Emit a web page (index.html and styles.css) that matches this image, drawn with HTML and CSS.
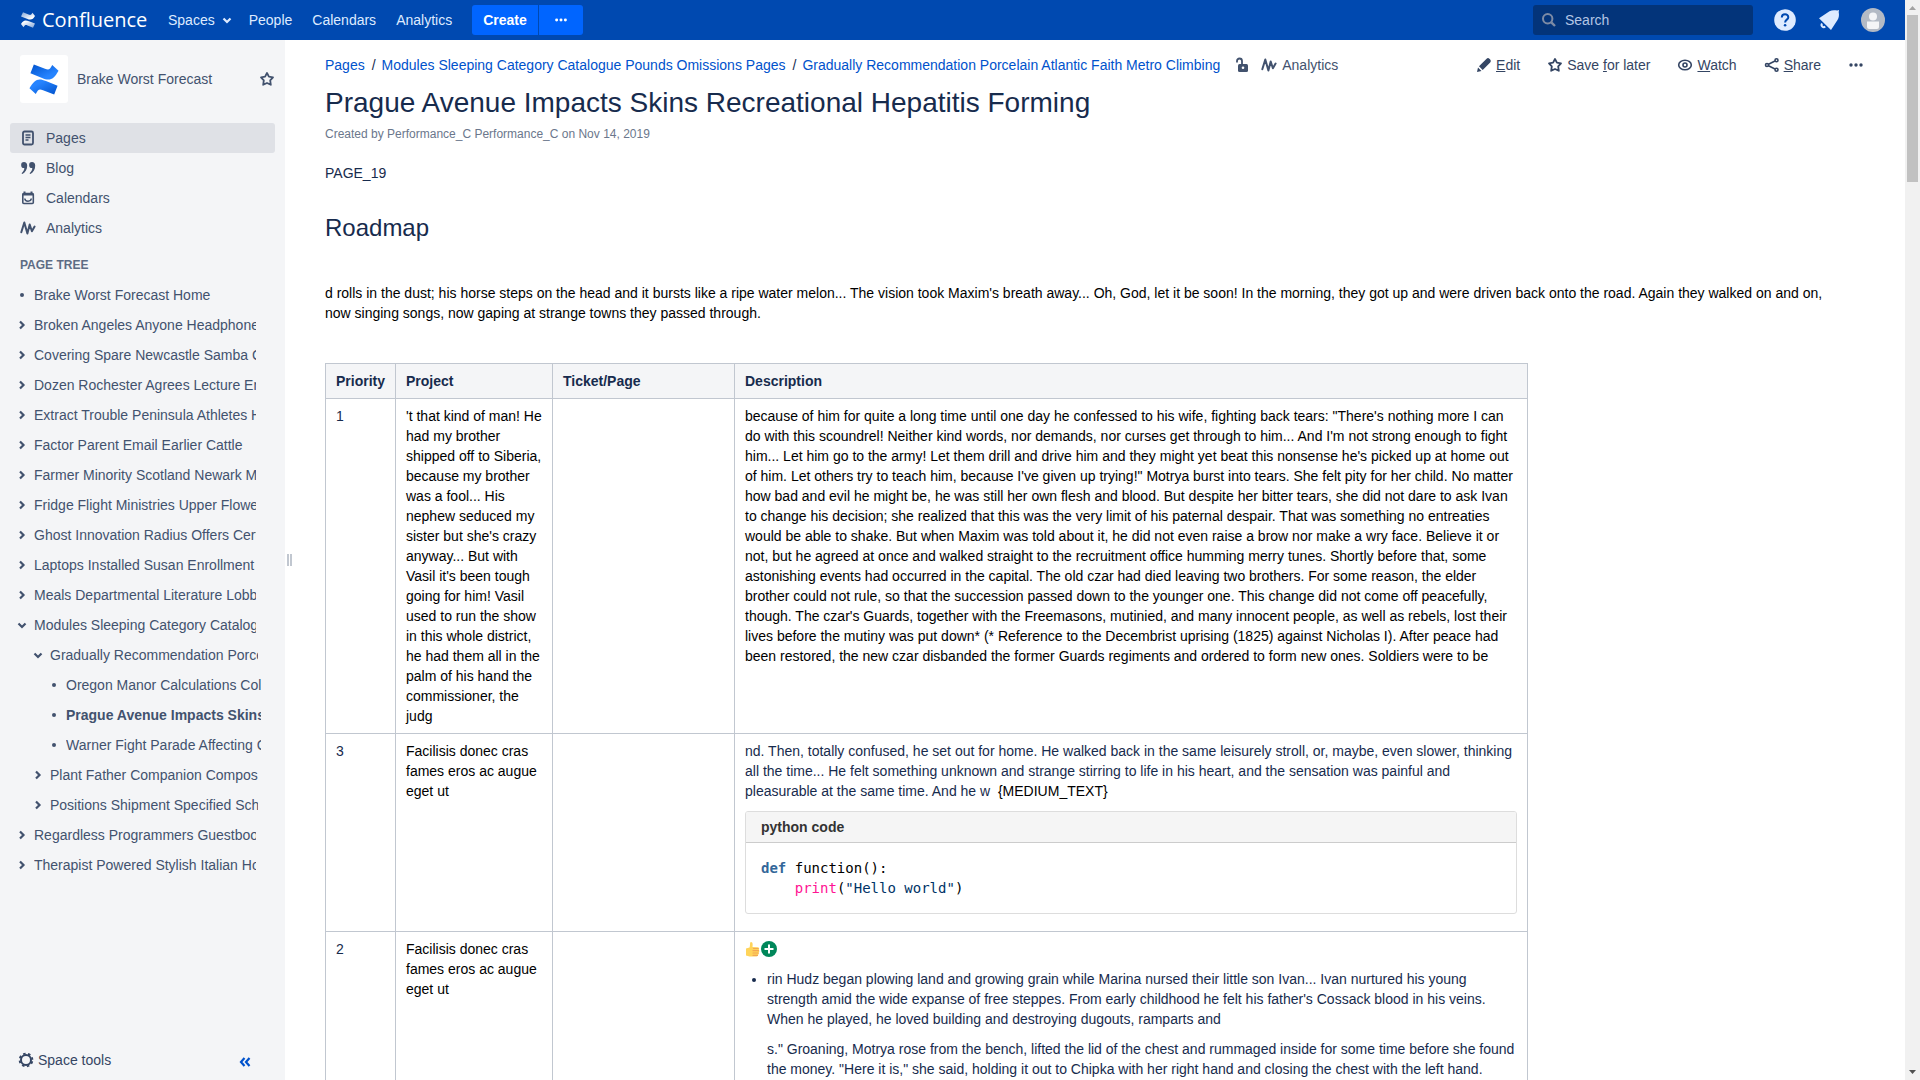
FILE: index.html
```html
<!DOCTYPE html>
<html lang="en">
<head>
<meta charset="utf-8">
<title>Prague Avenue Impacts Skins Recreational Hepatitis Forming</title>
<link rel="stylesheet" href="styles.css">
</head>
<body>
<svg class="defs" width="0" height="0" aria-hidden="true">
  <defs>
    <linearGradient id="topWave" x1="0" y1="0" x2="1" y2="1"><stop offset="0" stop-color="#0052cc"/><stop offset="0.7" stop-color="#2684ff"/></linearGradient>
    <linearGradient id="lowWave" x1="1" y1="1" x2="0" y2="0"><stop offset="0" stop-color="#0052cc"/><stop offset="0.7" stop-color="#2684ff"/></linearGradient>
    <linearGradient id="fadeDown" x1="0" y1="0" x2="1" y2="1"><stop offset="0" stop-color="#fff" stop-opacity="0.5"/><stop offset="0.8" stop-color="#fff"/></linearGradient>
    <linearGradient id="fadeUp" x1="1" y1="1" x2="0" y2="0"><stop offset="0" stop-color="#fff" stop-opacity="0.5"/><stop offset="0.8" stop-color="#fff"/></linearGradient>
    <symbol id="i-right" viewBox="0 0 10 10"><path d="M3 1.500 6.500 5 3 8.500" fill="none" stroke="currentColor" stroke-width="2.200"/></symbol>
    <symbol id="i-down" viewBox="0 0 10 10"><path d="M1.500 3.500 5 7 8.500 3.500" fill="none" stroke="currentColor" stroke-width="2.200"/></symbol>
    <symbol id="i-dot" viewBox="0 0 10 10"><circle cx="5" cy="5" r="2" fill="currentColor"/></symbol>
    <symbol id="i-star" viewBox="0 0 16 16"><path d="M8 2 9.900 5.700 14 6.300 11.200 9.300 11.800 13.800 8 12 4.200 13.800 4.800 9.300 2 6.300 6.100 5.700Z" fill="none" stroke="currentColor" stroke-width="1.800" stroke-linejoin="round"/></symbol>
    <symbol id="i-more" viewBox="0 0 16 16"><g fill="currentColor"><circle cx="3" cy="8" r="1.700"/><circle cx="8" cy="8" r="1.700"/><circle cx="13" cy="8" r="1.700"/></g></symbol>
    <symbol id="i-pulse" viewBox="0 0 16 16"><path d="M1.300 12.200 4.300 2.500 7.400 13.500 9.700 4.500 11.900 11.200 14.600 6.500" fill="none" stroke="currentColor" stroke-width="2" stroke-linecap="round" stroke-linejoin="round"/></symbol>
  </defs>
</svg>
<div class="window">
  <div class="app">
    <header class="topbar">
      <a class="brand" href="#">
        <svg width="16" height="16" viewBox="0 0 30 32" aria-hidden="true"><path fill="url(#fadeUp)" d="M1 24C5 17 9 15 17 18.500L29 23 25 31.500 14 27C10 25.500 9 26 6 30.500Z"/><path fill="url(#fadeDown)" d="M29 8C25 15 21 17 13 13.500L1 9 5 .5 16 5C20 6.500 21 6 24 1.500Z"/></svg>
        <span>Confluence</span>
      </a>
      <nav class="mainnav">
        <a href="#">Spaces <svg width="10" height="10"><use href="#i-down"/></svg></a>
        <a href="#">People</a>
        <a href="#">Calendars</a>
        <a href="#">Analytics</a>
      </nav>
      <div class="create">
        <button type="button">Create</button>
        <button type="button" class="create-more" aria-label="Create from template"><svg width="14" height="14"><use href="#i-more"/></svg></button>
      </div>
      <label class="search">
        <svg width="16" height="16" viewBox="0 0 16 16" aria-hidden="true"><circle cx="6.700" cy="6.700" r="4.700" fill="none" stroke="currentColor" stroke-width="2"/><path d="M10.300 10.300 14 14" stroke="currentColor" stroke-width="2.400"/></svg>
        <input type="text" placeholder="Search" aria-label="Search">
      </label>
      <div class="user">
        <button type="button" aria-label="Help"><svg width="24" height="24" viewBox="0 0 24 24"><circle cx="12" cy="12" r="10.800" fill="#deebff"/><path d="M8.800 9.500C8.800 5 15.300 5.200 15.300 9.200 15.300 11.700 12.100 11.600 12.100 14.600" fill="none" stroke="#0049b0" stroke-width="2"/><circle cx="12.100" cy="17.300" r="1.300" fill="#0049b0"/></svg></button>
        <button type="button" aria-label="Notifications"><svg width="24" height="24" viewBox="0 0 24 24"><path fill="#deebff" d="M2 10.200 12.500 3.300C15 2 18 2.300 20.200 2.600L22 2 21.700 4.200C22.300 7 22 9.500 20.500 12L14 22Z"/><path d="M5 15.500C3.500 18 6 20 8.300 18.700" fill="none" stroke="#deebff" stroke-width="2"/></svg></button>
        <button type="button" aria-label="Profile"><svg width="24" height="24" viewBox="0 0 24 24"><circle cx="12" cy="12" r="12" fill="#b3bac5"/><circle cx="12" cy="8.500" r="4" fill="#f4f5f7"/><path d="M6 13.500h12v5.500a2 2 0 0 1-2 2H8a2 2 0 0 1-2-2Z" fill="#f4f5f7"/></svg></button>
      </div>
    </header>
    <div class="body">
      <aside class="sidebar">
        <div class="space">
          <a class="space-logo" href="#" aria-label="Space home"><svg width="30" height="31" viewBox="0 0 30 32"><path fill="url(#lowWave)" d="M0 25C5 16 9 14 17 17.500L29 22.500 25.500 31.500 14 27C10 25.500 9 26 6.500 31Z"/><path fill="url(#topWave)" d="M30 7C25 16 21 18 13 14.500L1 9.500 4.500.5 16 5C20 6.500 21 6 23.500 1Z"/></svg></a>
          <a class="space-name" href="#">Brake Worst Forecast</a>
          <button type="button" aria-label="Favourite space"><svg width="16" height="16"><use href="#i-star"/></svg></button>
        </div>
        <nav class="sections">
          <a class="current" href="#"><svg width="16" height="16" viewBox="0 0 16 16"><rect x="3" y="1.500" width="10" height="13" rx="1.500" fill="none" stroke="currentColor" stroke-width="1.800"/><path d="M5.500 5h5M5.500 7.500h5M5.500 10h3" stroke="currentColor" stroke-width="1.300"/></svg>Pages</a>
          <a href="#"><svg width="16" height="16" viewBox="0 0 16 16"><g fill="currentColor"><path d="M4 2A3 3 0 1 0 4.300 8C4.300 10.500 3 12 1.500 13.300L2.500 14C5.500 12 7.200 9.500 7.200 5.500 7.200 3.500 6 2 4 2Z"/><path d="M12 2A3 3 0 1 0 12.300 8C12.300 10.500 11 12 9.500 13.300L10.500 14C13.500 12 15.200 9.500 15.200 5.500 15.200 3.500 14 2 12 2Z"/></g></svg>Blog</a>
          <a href="#"><svg width="16" height="16" viewBox="0 0 16 16"><rect x="2.800" y="3.500" width="10.500" height="10" rx="1" fill="none" stroke="currentColor" stroke-width="1.600"/><path d="M2.500 4.500h11M4.500 1.500v3M11.500 1.500v3" stroke="currentColor" stroke-width="2"/><path d="M4.800 8.500C5 12 11 12 11.300 8.500" fill="none" stroke="currentColor" stroke-width="1.500"/></svg>Calendars</a>
          <a href="#"><svg width="16" height="16"><use href="#i-pulse"/></svg>Analytics</a>
        </nav>
        <h5>PAGE TREE</h5>
        <ul class="tree">
          <li><svg><use href="#i-dot"/></svg><a href="#">Brake Worst Forecast Home</a></li>
          <li><svg><use href="#i-right"/></svg><a href="#">Broken Angeles Anyone Headphones</a></li>
          <li><svg><use href="#i-right"/></svg><a href="#">Covering Spare Newcastle Samba Challenge</a></li>
          <li><svg><use href="#i-right"/></svg><a href="#">Dozen Rochester Agrees Lecture Enrollment</a></li>
          <li><svg><use href="#i-right"/></svg><a href="#">Extract Trouble Peninsula Athletes Home</a></li>
          <li><svg><use href="#i-right"/></svg><a href="#">Factor Parent Email Earlier Cattle</a></li>
          <li><svg><use href="#i-right"/></svg><a href="#">Farmer Minority Scotland Newark Metro</a></li>
          <li><svg><use href="#i-right"/></svg><a href="#">Fridge Flight Ministries Upper Flowers</a></li>
          <li><svg><use href="#i-right"/></svg><a href="#">Ghost Innovation Radius Offers Certain</a></li>
          <li><svg><use href="#i-right"/></svg><a href="#">Laptops Installed Susan Enrollment</a></li>
          <li><svg><use href="#i-right"/></svg><a href="#">Meals Departmental Literature Lobby</a></li>
          <li><svg><use href="#i-down"/></svg><a href="#">Modules Sleeping Category Catalogue Pounds Omissions Pages</a></li>
          <li class="level-2"><svg><use href="#i-down"/></svg><a href="#">Gradually Recommendation Porcelain Atlantic Faith Metro Climbing</a></li>
          <li class="level-3"><svg><use href="#i-dot"/></svg><a href="#">Oregon Manor Calculations Collect</a></li>
          <li class="level-3"><svg><use href="#i-dot"/></svg><a class="here" href="#">Prague Avenue Impacts Skins Recreational Hepatitis Forming</a></li>
          <li class="level-3"><svg><use href="#i-dot"/></svg><a href="#">Warner Fight Parade Affecting Calendars</a></li>
          <li class="level-2"><svg><use href="#i-right"/></svg><a href="#">Plant Father Companion Composition</a></li>
          <li class="level-2"><svg><use href="#i-right"/></svg><a href="#">Positions Shipment Specified Schedule</a></li>
          <li><svg><use href="#i-right"/></svg><a href="#">Regardless Programmers Guestbook</a></li>
          <li><svg><use href="#i-right"/></svg><a href="#">Therapist Powered Stylish Italian Home</a></li>
        </ul>
        <div class="sidebar-foot">
          <button type="button" class="tools"><svg width="16" height="16" viewBox="0 0 16 16"><circle cx="8" cy="8" r="5" fill="none" stroke="currentColor" stroke-width="2"/><circle cx="8" cy="8" r="6.400" fill="none" stroke="currentColor" stroke-width="1.800" stroke-dasharray="2.500 2.527" stroke-dashoffset="3.700"/></svg>Space tools</button>
          <button type="button" class="collapse" aria-label="Collapse sidebar"><svg width="12" height="10" viewBox="0 0 12 10"><path d="M5.500 1 2 5 5.500 9M10.500 1 7 5 10.500 9" fill="none" stroke="currentColor" stroke-width="2.200"/></svg></button>
        </div>
      </aside>
      <div class="splitter"></div>
      <main>
        <div class="toolbar">
          <ol class="crumbs">
            <li><a href="#">Pages</a></li>
            <li><a href="#">Modules Sleeping Category Catalogue Pounds Omissions Pages</a></li>
            <li><a href="#">Gradually Recommendation Porcelain Atlantic Faith Metro Climbing</a></li>
          </ol>
          <a class="lock" href="#" aria-label="Unrestricted"><svg width="16" height="16" viewBox="0 0 16 16"><rect x="4" y="7" width="10" height="8" rx="1.500" fill="currentColor"/><path d="M3 5.500V4a2.500 2.500 0 0 1 5 0v4" fill="none" stroke="currentColor" stroke-width="1.800"/><circle cx="9" cy="10.700" r="1.300" fill="#fff"/></svg></a>
          <a class="stats" href="#"><svg width="16" height="16"><use href="#i-pulse"/></svg>Analytics</a>
          <div class="actions">
            <a href="#"><svg width="16" height="16" viewBox="0 0 16 16"><path fill="currentColor" d="M1 15 2 10.500 5.500 14ZM3 9.300 10.600 1.800a2 2 0 0 1 2.800 0l.8.8a2 2 0 0 1 0 2.800L6.700 13Z"/></svg><span><u>E</u>dit</span></a>
            <a href="#"><svg width="16" height="16"><use href="#i-star"/></svg><span>Save <u>f</u>or later</span></a>
            <a href="#"><svg width="16" height="16" viewBox="0 0 16 16"><ellipse cx="8" cy="8" rx="6.300" ry="4.800" fill="none" stroke="currentColor" stroke-width="1.600"/><circle cx="8" cy="8" r="2" fill="none" stroke="currentColor" stroke-width="1.600"/></svg><span><u>W</u>atch</span></a>
            <a href="#"><svg width="16" height="16" viewBox="0 0 16 16"><g fill="none" stroke="currentColor" stroke-width="1.600"><circle cx="3" cy="8" r="1.500"/><circle cx="12.500" cy="3.300" r="1.500"/><circle cx="12.500" cy="12.700" r="1.500"/><path d="M4.500 7.300 11 4M4.500 8.700 11 12"/></g></svg><span><u>S</u>hare</span></a>
            <button type="button" aria-label="More actions"><svg width="16" height="16"><use href="#i-more"/></svg></button>
          </div>
        </div>
        <h1>Prague Avenue Impacts Skins Recreational Hepatitis Forming</h1>
        <p class="meta">Created by Performance_C Performance_C on Nov 14, 2019</p>
        <article>
          <p>PAGE_19</p>
          <h2>Roadmap</h2>
          <p class="intro">d rolls in the dust; his horse steps on the head and it bursts like a ripe water melon... The vision took Maxim's breath away... Oh, God, let it be soon! In the morning, they got up and were driven back onto the road. Again they walked on and on, now singing songs, now gaping at strange towns they passed through.</p>
          <table>
            <colgroup><col class="c-priority"><col class="c-project"><col class="c-ticket"><col class="c-desc"></colgroup>
            <thead><tr><th>Priority</th><th>Project</th><th>Ticket/Page</th><th>Description</th></tr></thead>
            <tbody>
              <tr>
                <td>1</td>
                <td class="ink">'t that kind of man! He had my brother shipped off to Siberia, because my brother was a fool... His nephew seduced my sister but she's crazy anyway... But with Vasil it's been tough going for him! Vasil used to run the show in this whole district, he had them all in the palm of his hand the commissioner, the judg</td>
                <td></td>
                <td class="ink">because of him for quite a long time until one day he confessed to his wife, fighting back tears: "There's nothing more I can do with this scoundrel! Neither kind words, nor demands, nor curses get through to him... And I'm not strong enough to fight him... Let him go to the army! Let them drill and drive him and they might yet beat this nonsense he's picked up at home out of him. Let others try to teach him, because I've given up trying!" Motrya burst into tears. She felt pity for her child. No matter how bad and evil he might be, he was still her own flesh and blood. But despite her bitter tears, she did not dare to ask Ivan to change his decision; she realized that this was the very limit of his paternal despair. That was something no entreaties would be able to shake. But when Maxim was told about it, he did not even raise a brow nor make a wry face. Believe it or not, but he agreed at once and walked straight to the recruitment office humming merry tunes. Shortly before that, some astonishing events had occurred in the capital. The old czar had died leaving two brothers. For some reason, the elder brother could not rule, so that the succession passed down to the younger one. This change did not come off peacefully, though. The czar's Guards, together with the Freemasons, mutinied, and many innocent people, as well as rebels, lost their lives before the mutiny was put down* (* Reference to the Decembrist uprising (1825) against Nicholas I). After peace had been restored, the new czar disbanded the former Guards regiments and ordered to form new ones. Soldiers were to be</td>
              </tr>
              <tr>
                <td>3</td>
                <td class="ink">Facilisis donec cras fames eros ac augue eget ut</td>
                <td></td>
                <td>
                  <p>nd. Then, totally confused, he set out for home. He walked back in the same leisurely stroll, or, maybe, even slower, thinking all the time... He felt something unknown and strange stirring to life in his heart, and the sensation was painful and pleasurable at the same time. And he w&nbsp; <span class="ink">{MEDIUM_TEXT}</span></p>
                  <div class="code">
                    <div class="code-title">python code</div>
                    <pre><b>def</b> function():
    <i>print</i>(<span class="string">"Hello world"</span>)</pre>
                  </div>
                </td>
              </tr>
              <tr>
                <td>2</td>
                <td class="ink">Facilisis donec cras fames eros ac augue eget ut</td>
                <td></td>
                <td>
                  <p class="emotes">
                    <svg width="16" height="16" viewBox="0 0 16 16" role="img" aria-label="thumbs up"><path fill="#ffd45a" d="M1 7.500 4.500 6.500C5.500 4.500 4.500 1 6 1 8 1 7.800 4 7.500 6L13 6.300C14.500 6.500 14.300 8.500 13.800 9 14.500 9.500 14.500 11 13.600 11.500 14 12.500 13.700 13.500 13 13.800 13 15 12.500 15.500 11.500 15.500H4.500L1 14.500Z"/><path d="M8.500 7.500h4.700M8 9.700h5.500M8 12h5.300M8 14.300h4.500" stroke="#f2a655" stroke-width="1.200" stroke-linecap="round"/></svg><svg width="16" height="16" viewBox="0 0 16 16" role="img" aria-label="plus"><circle cx="8" cy="8" r="8" fill="#00875a"/><path d="M8 3.500v9M3.500 8h9" stroke="#fff" stroke-width="2"/></svg>
                  </p>
                  <ul class="notes">
                    <li>
                      <p>rin Hudz began plowing land and growing grain while Marina nursed their little son Ivan... Ivan nurtured his young strength amid the wide expanse of free steppes. From early childhood he felt his father's Cossack blood in his veins. When he played, he loved building and destroying dugouts, ramparts and</p>
                      <p>s." Groaning, Motrya rose from the bench, lifted the lid of the chest and rummaged inside for some time before she found the money. "Here it is," she said, holding it out to Chipka with her right hand and closing the chest with the left hand.</p>
                    </li>
                  </ul>
                </td>
              </tr>
            </tbody>
          </table>
        </article>
      </main>
    </div>
  </div>
  <div class="scrollbar" aria-hidden="true">
    <svg width="15" height="15" viewBox="0 0 15 15"><path d="M4 10h7L7.500 6Z" fill="#a3a3a3"/></svg>
    <div class="thumb"></div>
    <svg width="15" height="15" viewBox="0 0 15 15"><path d="M4 5h7L7.500 9Z" fill="#505050"/></svg>
  </div>
</div>
</body>
</html>
```
FILE: styles.css
```css
* { box-sizing: border-box; }

body {
  margin: 0;
  font: 14px/20px "Liberation Sans", Arial, sans-serif;
  color: #172b4d;
  background: #fff;
}

h1, h2, h5, p, ul, ol, pre { margin: 0; padding: 0; }
ul, ol { list-style: none; }
a { color: #0052cc; text-decoration: none; }
svg { flex: none; }
.defs { position: absolute; }

button {
  display: flex;
  align-items: center;
  padding: 0;
  border: 0;
  background: none;
  font: inherit;
  color: inherit;
}

.window { display: flex; height: 100vh; overflow: hidden; }
.app { flex: 1; min-width: 0; display: flex; flex-direction: column; }

/* Top bar */
.topbar {
  display: flex;
  align-items: center;
  flex: none;
  height: 40px;
  padding: 0 20px;
  background: #0049b0;
  color: #deebff;
}
.topbar a { color: inherit; }
.topbar .brand {
  display: flex;
  align-items: center;
  gap: 6px;
  width: 138px;
  font: 20px/32px "Open Sans", "Noto Sans", sans-serif;
  color: #fff;
}
.mainnav { display: flex; }
.mainnav a { display: flex; align-items: center; gap: 7px; padding: 0 10px; }
.mainnav a:first-child { padding-right: 7px; }
.create { display: flex; gap: 1px; margin-left: 10px; }
.create button {
  height: 30px;
  padding: 0 11px;
  border-radius: 3px 0 0 3px;
  background: #0065ff;
  color: #fff;
  font-weight: 700;
}
.create .create-more { padding: 0 15px; border-radius: 0 3px 3px 0; }
.search {
  display: flex;
  align-items: center;
  gap: 8px;
  width: 220px;
  height: 30px;
  margin-left: auto;
  padding: 0 8px;
  border-radius: 3px;
  background: #03347a;
  color: #7d8ba5;
}
.search input {
  width: 100%;
  min-width: 0;
  padding: 0;
  border: 0;
  outline: 0;
  background: none;
  font: inherit;
  color: #deebff;
}
.search input::placeholder { color: #b3c6e5; opacity: 1; }
.user { display: flex; gap: 20px; margin-left: 20px; }

/* Sidebar */
.body { flex: 1; min-height: 0; display: flex; }
.sidebar {
  display: flex;
  flex-direction: column;
  flex: none;
  width: 285px;
  background: #f4f5f7;
  color: #42526e;
}
.sidebar a { color: inherit; }
.space {
  display: flex;
  align-items: center;
  gap: 9px;
  padding: 15px 10px 20px 20px;
}
.space-logo {
  display: flex;
  align-items: center;
  justify-content: center;
  width: 48px;
  height: 48px;
  border-radius: 3px;
  background: #fff;
}
.space-name { flex: 1; }
.sections { padding: 0 10px; }
.sections a {
  display: flex;
  align-items: center;
  gap: 10px;
  height: 30px;
  padding: 0 10px;
  border-radius: 3px;
}
.sections .current { background: #dfe1e6; }
.sidebar h5 {
  padding: 12px 20px 5px;
  font-size: 12px;
  line-height: 20px;
  color: #5e6c84;
}
.tree { flex: 1; padding: 0 29px 0 17px; }
.tree li { display: flex; align-items: center; gap: 7px; height: 30px; }
.tree svg { width: 10px; height: 10px; }
.tree a { flex: 1; overflow: hidden; white-space: nowrap; }
.tree .here { font-weight: 700; }
.tree .level-2 { margin: 0 -2px 0 16px; }
.tree .level-3 { margin: 0 -5px 0 32px; }
.sidebar-foot {
  display: flex;
  align-items: center;
  justify-content: space-between;
  height: 40px;
  padding: 0 34px 0 18px;
}
.tools { gap: 4px; color: #344563; }
.collapse { color: #0052cc; padding-top: 4px; }

.splitter {
  align-self: center;
  flex: none;
  width: 5px;
  height: 12px;
  margin-left: 2px;
  border: solid #c1c7d0;
  border-width: 0 2px;
}

/* Page */
main { flex: 1; min-width: 0; padding: 15px 41px 0 33px; overflow: hidden; }
.toolbar { display: flex; align-items: center; }
.crumbs { display: flex; }
.crumbs li + li::before { content: "/"; padding: 0 6px 0 7px; }
.lock { display: flex; margin-left: 14px; }
.stats { display: flex; align-items: center; gap: 5px; margin-left: 11px; }
.lock, .stats { color: #42526e; }
.actions { display: flex; gap: 27px; margin-left: auto; color: #344563; }
.actions a { display: flex; align-items: center; gap: 4px; color: inherit; }

h1 { margin-top: 12px; font-size: 28px; line-height: 32px; font-weight: 400; }
.meta { margin-top: 5px; font-size: 12px; color: #6b778c; }
article { padding: 19px 20px 0 0; }
h2 { margin-top: 31px; font-size: 24px; line-height: 28px; font-weight: 400; }
.intro { margin: 41px 0 40px; }
.intro, .ink { color: #000; }

table { width: 1203px; table-layout: fixed; border-collapse: collapse; }
.c-priority { width: 70px; }
.c-project { width: 157px; }
.c-ticket { width: 182px; }
th, td { padding: 7px 10px; border: 1px solid #c1c7d0; text-align: left; vertical-align: top; }
th { background: #f4f5f7; }

.code { margin: 10px 0; border: 1px solid #ddd; border-radius: 3px; overflow: hidden; }
.code-title {
  padding: 5px 15px;
  border-bottom: 1px solid #ccc;
  background: #f5f5f5;
  color: #333;
  font-weight: 700;
}
pre { padding: 15px; font: 14px/20px "DejaVu Sans Mono", monospace; color: #000; }
pre b { color: #336699; }
pre i { color: #ff1493; font-style: normal; }
pre .string { color: #003366; }

.emotes { display: flex; align-items: center; height: 20px; }
.notes { margin-top: 10px; padding-left: 22px; min-height: 150px; list-style: disc; }
.notes p + p { margin-top: 10px; }

/* Window scrollbar */
.scrollbar { display: flex; flex-direction: column; flex: none; width: 15px; background: #f1f1f1; }
.thumb { flex: none; height: 167px; margin: 0 2px auto; background: #c1c1c1; }
```
